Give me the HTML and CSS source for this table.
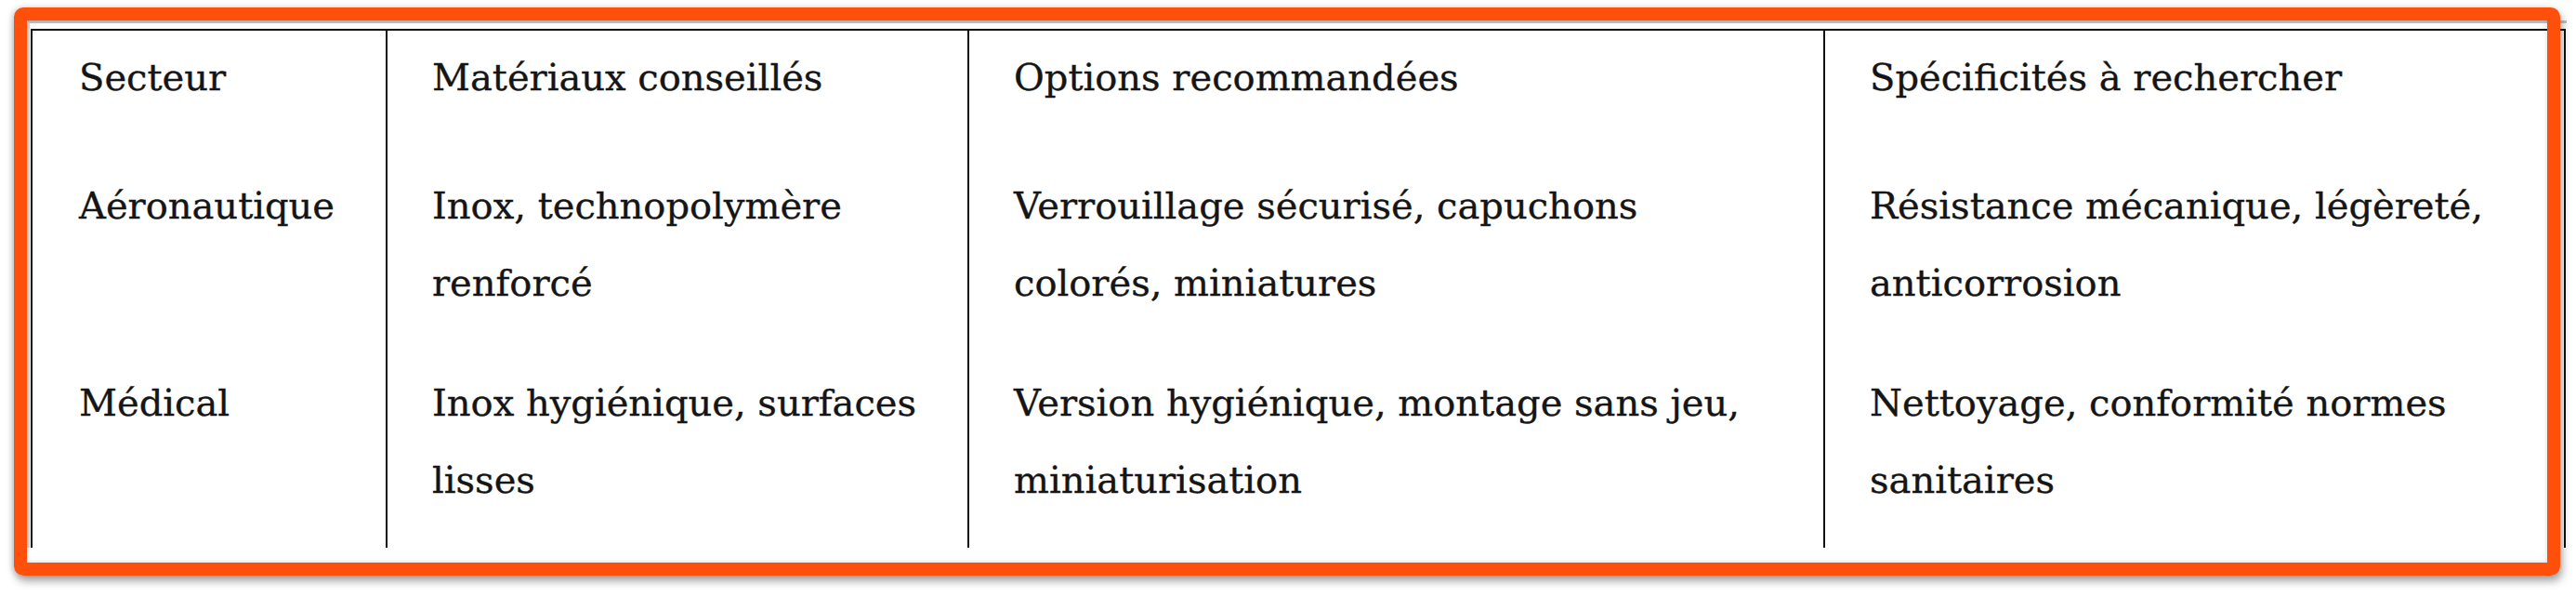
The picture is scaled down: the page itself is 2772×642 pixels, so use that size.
FILE: index.html
```html
<!DOCTYPE html>
<html lang="fr">
<head>
<meta charset="utf-8">
<title>Tableau des secteurs</title>
<link rel="stylesheet" href="styles.css">
</head>
<body>
<div class="stage">
  <div class="sheet">
    <div class="grid">
      <div class="cell head first">Secteur</div>
      <div class="cell head">Matériaux conseillés</div>
      <div class="cell head">Options recommandées</div>
      <div class="cell head">Spécificités à rechercher</div>

      <div class="cell first">Aéronautique</div>
      <div class="cell">Inox, technopolymère renforcé</div>
      <div class="cell">Verrouillage sécurisé, capuchons colorés, miniatures</div>
      <div class="cell">Résistance mécanique, légèreté, anticorrosion</div>

      <div class="cell first">Médical</div>
      <div class="cell">Inox hygiénique, surfaces lisses</div>
      <div class="cell">Version hygiénique, montage sans jeu, miniaturisation</div>
      <div class="cell">Nettoyage, conformité normes sanitaires</div>
    </div>
  </div>
  <div class="highlight"></div>
</div>
</body>
</html>
```

FILE: styles.css
```css
html, body {
  margin: 0;
  padding: 0;
  background: #ffffff;
}

.stage {
  position: relative;
  width: 2772px;
  height: 642px;
  padding-top: 22px;
  box-sizing: border-box;
  overflow: hidden;
}

.sheet {
  margin-left: 29px;
  width: 2733px;
  height: 567px;
  box-sizing: border-box;
  border-top: 3px solid #c2c2c2;
  border-left: 3px solid #d6d6d6;
  padding: 6px 0 0 1px;
  overflow: hidden;
  background: #ffffff;
}

.grid {
  display: grid;
  grid-template-columns: 382px 626px 921px 797px;
  border-top: 2px solid #111;
  border-left: 2px solid #111;
  width: max-content;
}

.cell {
  box-sizing: border-box;
  border-right: 2px solid #111;
  padding: 9px 40px 37px 48px;
  font-family: "DejaVu Serif", "Liberation Serif", serif;
  font-size: 40px;
  line-height: 83px;
  color: #151515;
  -webkit-text-stroke: 0.35px #151515;
}

.cell.head {
  padding-bottom: 46px;
}

.cell.first {
  padding-left: 50px;
}

.highlight {
  position: absolute;
  left: 15px;
  top: 8px;
  width: 2740px;
  height: 611px;
  box-sizing: border-box;
  border: 14px solid #fe500a;
  border-radius: 10px;
  box-shadow: 2px 6px 10px rgba(0, 0, 0, 0.35), -2px 0 6px rgba(0, 0, 0, 0.15), inset 0 0 5px rgba(0, 0, 0, 0.18);
  pointer-events: none;
}
```
